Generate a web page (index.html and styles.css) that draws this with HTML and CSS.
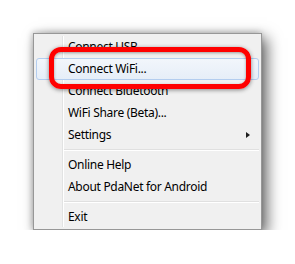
FILE: index.html
```html
<!DOCTYPE html>
<html>
<head>
<meta charset="utf-8">
<link rel="stylesheet" href="styles.css">
</head>
<body>
<div class="menu">
  <div class="gutter"></div>
  <div class="item">Connect USB</div>
  <div class="item hl">Connect WiFi...</div>
  <div class="item">Connect Bluetooth</div>
  <div class="item">WiFi Share (Beta)...</div>
  <div class="item sub">Settings<span class="arrow"></span></div>
  <div class="sep"></div>
  <div class="item">Online Help</div>
  <div class="item">About PdaNet for Android</div>
  <div class="sep"></div>
  <div class="item">Exit</div>
  <div class="callout"></div>
</div>
</body>
</html>
```
FILE: styles.css
```css
html, body {
  margin: 0;
  background: #ffffff;
}
body {
  padding: 33px 0 0 33px;
  font-family: "Noto Sans", "Open Sans", sans-serif;
  font-size: 12px;
  letter-spacing: -0.3px;
  color: #000;
}
.menu {
  position: relative;
  width: 223px;
  padding: 2px 2px 1px 2px;
  background: #f0f0f0;
  border: 1px solid #979797;
  box-shadow: 5px 5px 14px rgba(0, 0, 0, 0.6), -1px -1px 6px rgba(0, 0, 0, 0.2);
  display: flex;
  flex-direction: column;
}
.gutter {
  position: absolute;
  left: 28px;
  top: 2px;
  bottom: 2px;
  width: 1px;
  background: #e2e3e3;
  border-right: 1px solid #ffffff;
}
.item {
  position: relative;
  height: 22px;
  line-height: 22px;
  padding-left: 32px;
  box-sizing: border-box;
  white-space: nowrap;
}
.item.hl {
  background: linear-gradient(#f2f6fb, #e6eef8);
  border: 1px solid #b3cdef;
  border-radius: 3px;
  line-height: 20px;
  padding-left: 31px;
  z-index: 1;
}
.arrow {
  position: absolute;
  right: 9px;
  top: 8px;
  width: 0;
  height: 0;
  border-top: 3.5px solid transparent;
  border-bottom: 3.5px solid transparent;
  border-left: 4px solid #1e1e1e;
}
.sep {
  height: 8px;
  display: flex;
  flex-direction: column;
  justify-content: center;
  padding-left: 28px;
}
.sep::before {
  content: "";
  display: block;
  height: 1px;
  background: #e0e0e0;
  border-bottom: 1px solid #ffffff;
}
.callout {
  position: absolute;
  left: 15px;
  top: 13px;
  width: 192px;
  height: 32px;
  border: 5px solid #ff0000;
  border-radius: 12px;
  box-shadow: 0 1px 4px rgba(0, 0, 0, 0.45), inset 0 1px 3px rgba(0, 0, 0, 0.35);
  z-index: 2;
}
```
